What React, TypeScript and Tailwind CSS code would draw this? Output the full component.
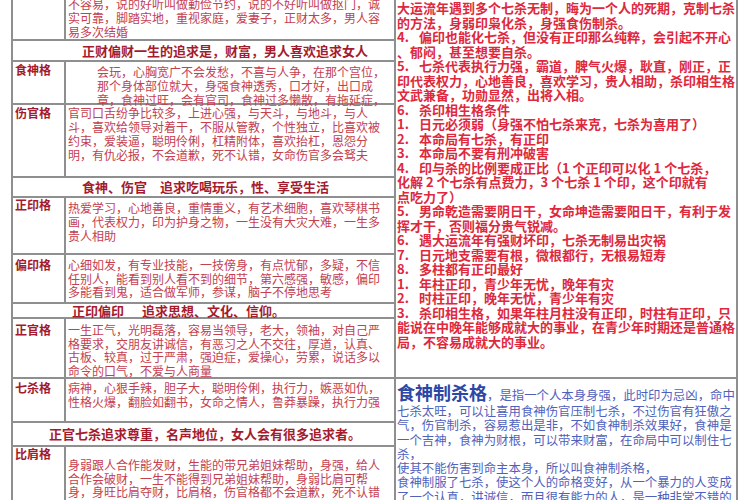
import React from "react";

const Line = ({ children }: { children: React.ReactNode }) => (
  <div className="whitespace-nowrap">{children}</div>
);

const Num = ({ n }: { n: string }) => (
  <span className="inline-block w-[22px]">{n}</span>
);

export default function App() {
  return (
    <div className="w-[750px] h-[500px] overflow-hidden bg-white flex font-['Noto_Sans_CJK_SC',sans-serif]">
      {/* Left table */}
      <div className="ml-[11px] w-[385px] h-[500px] border-x-2 border-[#8f8f8f] flex flex-col">
        {/* Row A (tail of 正财) */}
        <div className="flex h-[41px] shrink-0 border-b-2 border-[#8f8f8f]">
          <div className="w-[53px] border-r-2 border-[#8f8f8f]" />
          <div className="flex-1 pl-[2px] flex flex-col justify-end text-[12px] leading-[14px] text-[#c4404f]">
            <Line>不容易，说的好听叫做勤俭节约，说的不好听叫做抠门，诚</Line>
            <Line>实可靠，脚踏实地，重视家庭，爱妻子，正财太多，男人容</Line>
            <Line>易多次结婚</Line>
          </div>
        </div>
        {/* Header 1 */}
        <div className="flex items-center h-[21px] shrink-0 border-b-2 border-[#8f8f8f] pl-[69px] text-[13px] leading-[14px] font-bold text-[#a51b2e]">
          <Line>正财偏财一生的追求是，财富，男人喜欢追求女人</Line>
        </div>
        {/* 食神格 */}
        <div className="flex h-[43px] shrink-0 border-b-2 border-[#8f8f8f]">
          <div className="w-[53px] border-r-2 border-[#8f8f8f] pl-[2px] pt-[1px] text-[12px] leading-[14px] font-bold text-[#a3192d]">食神格</div>
          <div className="flex-1 pl-[31px] pt-[3px] text-[12px] leading-[14px] text-[#c4404f]">
            <Line>会玩，心胸宽广不会发愁，不喜与人争，在那个宫位，</Line>
            <Line>那个身体部位就大，身强食神透秀，口才好，出口成</Line>
            <Line>章，食神过旺，会有官司，食神过多懒散，有拖延症，</Line>
          </div>
        </div>
        {/* 伤官格 */}
        <div className="flex h-[73px] shrink-0 border-b-2 border-[#8f8f8f]">
          <div className="w-[53px] border-r-2 border-[#8f8f8f] pl-[2px] pt-[1px] text-[12px] leading-[14px] font-bold text-[#a3192d]">伤官格</div>
          <div className="flex-1 pl-[2px] pt-[1px] text-[12px] leading-[14px] text-[#c4404f]">
            <Line>官司口舌纷争比较多，上进心强，与天斗，与地斗，与人</Line>
            <Line>斗，喜欢给领导对着干，不服从管教，个性独立，比喜欢被</Line>
            <Line>约束，爱装逼，聪明伶俐，杠精附体，喜欢抬杠，恩怨分</Line>
            <Line>明，有仇必报，不会道歉，死不认错，女命伤官多会驽夫</Line>
          </div>
        </div>
        {/* Header 2 */}
        <div className="flex items-center h-[20px] shrink-0 border-b-2 border-[#8f8f8f] pl-[69px] text-[13px] leading-[14px] font-bold text-[#a51b2e]">
          <Line>食神、伤官　追求吃喝玩乐，性、享受生活</Line>
        </div>
        {/* 正印格 */}
        <div className="flex h-[57px] shrink-0 border-b-2 border-[#8f8f8f]">
          <div className="w-[53px] border-r-2 border-[#8f8f8f] pl-[2px] pt-[0px] text-[12px] leading-[14px] font-bold text-[#a3192d]">正印格</div>
          <div className="flex-1 pl-[2px] pt-[3px] text-[12px] leading-[14px] text-[#c4404f]">
            <Line>热爱学习，心地善良，重情重义，有艺术细胞，喜欢琴棋书</Line>
            <Line>画，代表权力，印为护身之物，一生没有大灾大难，一生多</Line>
            <Line>贵人相助</Line>
          </div>
        </div>
        {/* 偏印格 */}
        <div className="flex h-[49px] shrink-0 border-b-2 border-[#8f8f8f]">
          <div className="w-[53px] border-r-2 border-[#8f8f8f] pl-[2px] pt-[3px] text-[12px] leading-[14px] font-bold text-[#a3192d]">偏印格</div>
          <div className="flex-1 pl-[2px] pt-[3px] text-[12px] leading-[13.5px] text-[#c4404f]">
            <Line>心细如发，有专业技能，一技傍身，有点忧郁，多疑，不信</Line>
            <Line>任别人，能看到别人看不到的细节，第六感强，敏感，偏印</Line>
            <Line>多能看到鬼，适合做军师，参谋，脑子不停地思考</Line>
          </div>
        </div>
        {/* Header 3 */}
        <div className="flex items-center h-[15px] shrink-0 border-b-2 border-[#8f8f8f] pl-[59px] text-[13px] leading-[13px] font-bold text-[#a51b2e]">
          <Line>
            正印偏印<span className="inline-block w-[18px]" />追求思想、文化、信仰。
          </Line>
        </div>
        {/* 正官格 */}
        <div className="flex h-[60px] shrink-0 border-b-2 border-[#8f8f8f]">
          <div className="w-[53px] border-r-2 border-[#8f8f8f] pl-[2px] pt-[4px] text-[12px] leading-[14px] font-bold text-[#a3192d]">正官格</div>
          <div className="flex-1 pl-[2px] pt-[4px] text-[12px] leading-[13.5px] text-[#c4404f]">
            <Line>一生正气，光明磊落，容易当领导，老大，领袖，对自己严</Line>
            <Line>格要求，交朋友讲诚信，有恶习之人不交往，厚道，认真、</Line>
            <Line>古板、较真，过于严肃，强迫症，爱操心，劳累，说话多以</Line>
            <Line>命令的口气，不爱与人商量</Line>
          </div>
        </div>
        {/* 七杀格 */}
        <div className="flex h-[44px] shrink-0 border-b-2 border-[#8f8f8f]">
          <div className="w-[53px] border-r-2 border-[#8f8f8f] pl-[2px] pt-[2px] text-[12px] leading-[14px] font-bold text-[#a3192d]">七杀格</div>
          <div className="flex-1 pl-[2px] pt-[2px] text-[12px] leading-[14px] text-[#c4404f]">
            <Line>病神，心狠手辣，胆子大，聪明伶俐，执行力，嫉恶如仇，</Line>
            <Line>性格火爆，翻脸如翻书，女命之情人，鲁莽暴躁，执行力强</Line>
          </div>
        </div>
        {/* Header 4 */}
        <div className="flex items-center h-[24px] shrink-0 border-b-2 border-[#8f8f8f] pl-[36px] text-[13px] leading-[14px] font-bold text-[#a51b2e]">
          <Line>正官七杀追求尊重，名声地位，女人会有很多追求者。</Line>
        </div>
        {/* 比肩格 */}
        <div className="flex flex-1">
          <div className="w-[53px] border-r-2 border-[#8f8f8f] pl-[2px] pt-[0px] text-[12px] leading-[14px] font-bold text-[#a3192d]">比肩格</div>
          <div className="flex-1 pl-[2px] pt-[11px] text-[12px] leading-[13.5px] text-[#c4404f]">
            <Line>身弱跟人合作能发财，生能的带兄弟姐妹帮助，身强，给人</Line>
            <Line>合作会破财，一生不能得到兄弟姐妹帮助，身弱比肩可帮</Line>
            <Line>身，身旺比肩夺财，比肩格，伤官格都不会道歉，死不认错</Line>
          </div>
        </div>
      </div>

      {/* Right panel */}
      <div className="w-[342px] h-[500px] border-r-2 border-[#8f8f8f] flex flex-col">
        <div className="h-[379px] shrink-0 border-b-2 border-[#8f8f8f] pl-[1px] pt-[1px] text-[13px] leading-[14.5px] font-bold text-[#e0283d]">
          <Line>大运流年遇到多个七杀无制，晦为一个人的死期，克制七杀</Line>
          <Line>的方法，身弱印枭化杀，身强食伤制杀。</Line>
          <Line><Num n="4." />偏印也能化七杀，但没有正印那么纯粹，会引起不开心</Line>
          <Line>、郁闷，甚至想要自杀。</Line>
          <Line><Num n="5." />七杀代表执行力强，霸道，脾气火爆，耿直，刚正，正</Line>
          <Line>印代表权力，心地善良，喜欢学习，贵人相助，杀印相生格</Line>
          <Line>文武兼备，功勋显然，出将入相。</Line>
          <Line><Num n="6." />杀印相生格条件</Line>
          <Line><Num n="1." />日元必须弱（身强不怕七杀来克，七杀为喜用了）</Line>
          <Line><Num n="2." />本命局有七杀，有正印</Line>
          <Line><Num n="3." />本命局不要有刑冲破害</Line>
          <Line><Num n="4." />印与杀的比例要成正比（1 个正印可以化 1 个七杀，</Line>
          <Line>化解 2 个七杀有点费力，3 个七杀 1 个印，这个印就有</Line>
          <Line>点吃力了）</Line>
          <Line><Num n="5." />男命乾造需要阴日干，女命坤造需要阳日干，有利于发</Line>
          <Line>挥才干，否则福分贵气锐减。</Line>
          <Line><Num n="6." />遇大运流年有强财坏印，七杀无制易出灾祸</Line>
          <Line><Num n="7." />日元地支需要有根，微根都行，无根易短寿</Line>
          <Line><Num n="8." />多柱都有正印最好</Line>
          <Line><Num n="1." />年柱正印，青少年无忧，晚年有灾</Line>
          <Line><Num n="2." />时柱正印，晚年无忧，青少年有灾</Line>
          <Line><Num n="3." />杀印相生格，如果年柱月柱没有正印，时柱有正印，只</Line>
          <Line>能说在中晚年能够成就大的事业，在青少年时期还是普通格</Line>
          <Line>局，不容易成就大的事业。</Line>
        </div>
        <div className="flex-1 pl-[1px] pt-[5px] text-[12.4px] leading-[14.3px] text-[#4f61bd]">
          <div className="whitespace-nowrap leading-[17px]">
            <span className="text-[18px] font-bold text-[#2c47a6]">食神制杀格</span>，是指一个人本身身强，此时印为忌凶，命中
          </div>
          <Line>七杀太旺，可以让喜用食神伤官压制七杀，不过伤官有狂傲之</Line>
          <Line>气，伤官制杀，容易惹出是非，不如食神制杀效果好，食神是</Line>
          <Line>一个吉神，食神为财根，可以带来财富，在命局中可以制住七</Line>
          <Line>杀，</Line>
          <Line>使其不能伤害到命主本身，所以叫食神制杀格，</Line>
          <Line>食神制服了七杀，使这个人的命格变好，从一个暴力的人变成</Line>
          <Line>了一个认真，讲诚信，而且很有能力的人，是一种非常不错的</Line>
        </div>
      </div>
    </div>
  );
}
